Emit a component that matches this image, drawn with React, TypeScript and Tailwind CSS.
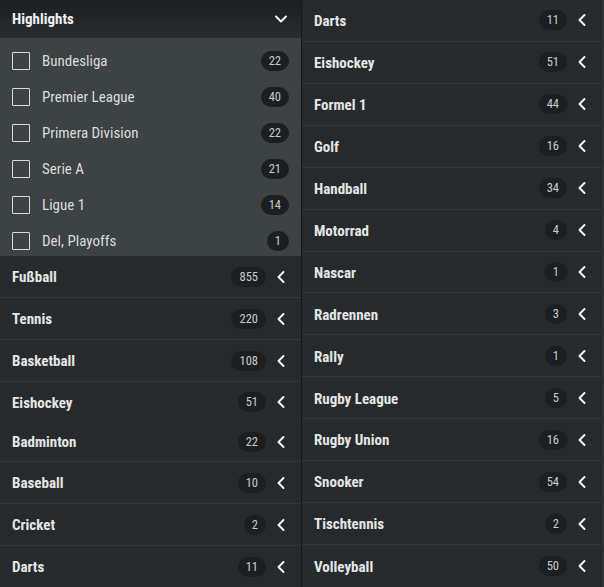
import { ChevronDown, ChevronLeft } from "lucide-react";

const highlights = [
  { name: "Bundesliga", count: 22 },
  { name: "Premier League", count: 40 },
  { name: "Primera Division", count: 22 },
  { name: "Serie A", count: 21 },
  { name: "Ligue 1", count: 14 },
  { name: "Del, Playoffs", count: 1 },
];

const leftSports = [
  { name: "Fußball", count: 855, h: "h-[42px]" },
  { name: "Tennis", count: 220, h: "h-[42px]" },
  { name: "Basketball", count: 108, h: "h-[42px]" },
  { name: "Eishockey", count: 51, h: "h-[40px]", noBorder: true },
  { name: "Badminton", count: 22, h: "h-[40px]" },
  { name: "Baseball", count: 10, h: "h-[42px]" },
  { name: "Cricket", count: 2, h: "h-[42px]" },
  { name: "Darts", count: 11, h: "h-[41px]", noBorder: true },
];

const rightSports = [
  { name: "Darts", count: 11 },
  { name: "Eishockey", count: 51 },
  { name: "Formel 1", count: 44 },
  { name: "Golf", count: 16 },
  { name: "Handball", count: 34 },
  { name: "Motorrad", count: 4 },
  { name: "Nascar", count: 1 },
  { name: "Radrennen", count: 3 },
  { name: "Rally", count: 1 },
  { name: "Rugby League", count: 5 },
  { name: "Rugby Union", count: 16 },
  { name: "Snooker", count: 54 },
  { name: "Tischtennis", count: 2 },
  { name: "Volleyball", count: 50 },
];

function Badge({ count }: { count: number }) {
  return (
    <span className="h-[20px] min-w-[21px] px-[8px] rounded-full bg-[#1c1f21] text-[12.5px] leading-[20px] text-[#c9cbcc] text-center">
      {count}
    </span>
  );
}

function SportRow({
  name,
  count,
  h = "h-[42px]",
  noBorder,
}: {
  name: string;
  count: number;
  h?: string;
  noBorder?: boolean;
}) {
  return (
    <div
      className={`${h} flex items-center pl-3 pr-[10px] ${
        noBorder ? "" : "border-b border-[#33383a]"
      }`}
    >
      <span className="flex-1 pt-[2px] text-[15px] font-bold text-[#e4e5e5]">{name}</span>
      <Badge count={count} />
      <ChevronLeft className="ml-[5px] w-[20px] h-[20px] text-[#f2f2f2]" strokeWidth={2.4} />
    </div>
  );
}

export default function App() {
  return (
    <div
      className="w-[604px] h-[587px] overflow-hidden bg-[#262a2c] flex"
      style={{ fontFamily: '"Roboto Condensed", "Roboto", "Liberation Sans", sans-serif' }}
    >
      {/* Left column */}
      <div className="w-[301px] flex flex-col">
        <div className="h-[38px] flex items-center pl-3 pr-[10px] bg-gradient-to-b from-[#1d2022] to-[#282c2e]">
          <span className="flex-1 text-[15px] font-bold text-[#f0f0f0]">Highlights</span>
          <ChevronDown className="w-[20px] h-[20px] text-[#f2f2f2]" strokeWidth={2.4} />
        </div>
        <div className="bg-[#3d4244] h-[218px] pt-[5px]">
          {highlights.map((item) => (
            <div key={item.name} className="h-[36px] flex items-center pl-3 pr-3">
              <span className="w-[18px] h-[18px] border border-[#d9dada] rounded-[1px]" />
              <span className="flex-1 ml-3 pt-[1px] text-[15px] text-[#dcdddd]">{item.name}</span>
              <Badge count={item.count} />
            </div>
          ))}
        </div>
        {leftSports.map((s) => (
          <SportRow key={s.name} {...s} />
        ))}
      </div>

      {/* Divider */}
      <div className="w-px bg-[#15181a]" />

      {/* Right column */}
      <div className="flex-1 flex flex-col border-r-2 border-[#2f3335]">
        {rightSports.map((s, i) => (
          <SportRow
            key={s.name}
            name={s.name}
            count={s.count}
            noBorder={i === rightSports.length - 1}
          />
        ))}
      </div>
    </div>
  );
}
